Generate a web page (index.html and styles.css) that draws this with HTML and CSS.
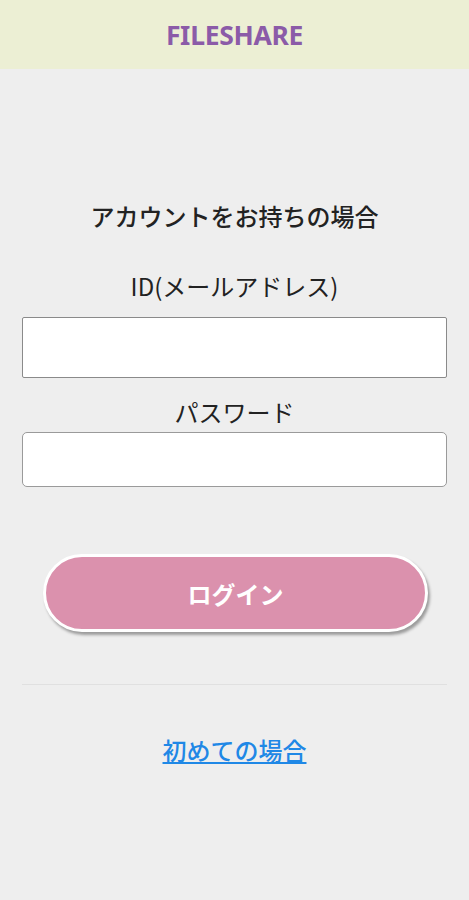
FILE: index.html
```html
<!DOCTYPE html>
<html lang="ja">
<head>
<meta charset="utf-8">
<title>FILESHARE</title>
<link rel="stylesheet" href="styles.css">
</head>
<body>
<header class="header">
  <h1 class="logo">FILESHARE</h1>
</header>
<main class="main">
  <h2 class="title">アカウントをお持ちの場合</h2>
  <form class="form">
    <label class="label label-id" for="id">ID(メールアドレス)</label>
    <input class="input input-id" id="id" type="text">
    <label class="label label-pw" for="pw">パスワード</label>
    <input class="input input-pw" id="pw" type="password">
    <button class="btn" type="button">ログイン</button>
  </form>
  <hr class="divider">
  <a class="link" href="#">初めての場合</a>
</main>
</body>
</html>
```
FILE: styles.css
```css
* { box-sizing: border-box; }
html, body { margin: 0; padding: 0; }
body {
  background: #eeeeee;
  font-family: "Noto Sans CJK JP", "Noto Sans", sans-serif;
  color: #222;
  min-height: 900px;
}
.header {
  height: 69px;
  background: #ecefd4;
  display: flex;
  align-items: center;
  justify-content: center;
}
.logo {
  margin: 0;
  font-family: "Noto Sans", sans-serif;
  font-size: 26.5px;
  font-weight: 700;
  color: #8b5ba8;
  letter-spacing: -0.3px;
}
.main {
  padding: 0 22px;
  display: flex;
  flex-direction: column;
  align-items: stretch;
}
.title {
  margin: 130px 0 0;
  text-align: center;
  font-size: 24px;
  font-weight: 500;
  line-height: 34px;
}
.form {
  display: flex;
  flex-direction: column;
}
.label {
  text-align: center;
  font-size: 24px;
  line-height: 30px;
}
.label-id { margin-top: 38px; margin-bottom: 16px; }
.label-pw { margin-top: 19px; margin-bottom: 5px; }
.input {
  background: #fff;
  border: 1.5px solid #8a8a8a;
  width: 100%;
}
.input-id { height: 61px; border-radius: 2px; }
.input-pw { height: 55px; border-radius: 5px; border-color: #9a9a9a; }
.btn {
  margin: 67px 19px 0 21px;
  height: 78px;
  border-radius: 39px;
  background: #db91ad;
  border: 3px solid #fff;
  box-shadow: 2px 3px 3px rgba(0,0,0,0.35);
  color: #fff;
  font-family: "Noto Sans CJK JP", sans-serif;
  font-size: 24px;
  font-weight: 700;
}
.divider {
  margin: 52px 0 0;
  border: 0;
  border-top: 1px solid #e0e0e0;
  height: 0;
}
.link {
  align-self: center;
  margin-top: 48px;
  font-size: 24px;
  line-height: 34px;
  color: #1f88e6;
  text-decoration: underline;
  font-weight: 500;
}
```
